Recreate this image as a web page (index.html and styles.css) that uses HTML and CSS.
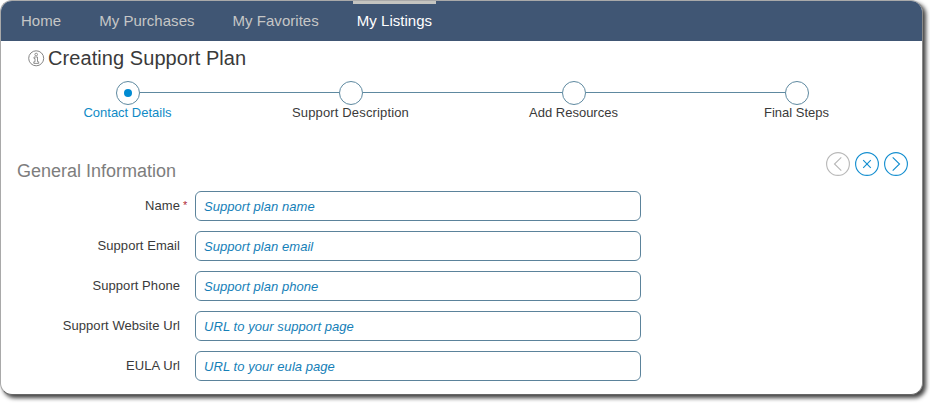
FILE: index.html
```html
<!DOCTYPE html>
<html lang="en">
<head>
<meta charset="utf-8">
<title>Creating Support Plan</title>
<link rel="stylesheet" href="styles.css">
</head>
<body>
<div class="window">
  <nav class="nav">
    <a class="tab">Home</a>
    <a class="tab">My Purchases</a>
    <a class="tab">My Favorites</a>
    <a class="tab active">My Listings</a>
  </nav>
  <header class="title">
    <svg class="info" width="17" height="17" viewBox="0 0 17 17" fill="none" stroke="#858585">
      <circle cx="8.2" cy="8.3" r="7.5"/>
      <circle cx="8.2" cy="4.5" r="1.3" stroke-width=".9"/>
      <path d="M6 7H9.5V11.8H10.7V13.4H5.8V11.8H7V8.5H6Z" stroke-width=".9"/>
    </svg>
    <h1>Creating Support Plan</h1>
  </header>
  <ol class="steps">
    <li class="step current"><span class="dot"></span><span>Contact Details</span></li>
    <li class="step wide"><span class="dot"></span><span>Support Description</span></li>
    <li class="step"><span class="dot"></span><span>Add Resources</span></li>
    <li class="step"><span class="dot"></span><span>Final Steps</span></li>
  </ol>
  <div class="section">
    <h2>General Information</h2>
    <div class="actions">
      <svg class="disabled" width="24" height="24" viewBox="0 0 24 24"><circle cx="12" cy="12" r="11.4"/><path d="M15.3 5.3L8.5 12L15.3 18.7"/></svg>
      <svg width="24" height="24" viewBox="0 0 24 24"><circle cx="12" cy="12" r="11.4"/><path d="M8.2 8.2L15.8 15.8M15.8 8.2L8.2 15.8"/></svg>
      <svg width="24" height="24" viewBox="0 0 24 24"><circle cx="12" cy="12" r="11.4"/><path d="M8.7 5.3L15.5 12L8.7 18.7"/></svg>
    </div>
  </div>
  <form class="form">
    <label for="name">Name</label><span class="mark">*</span><input id="name" placeholder="Support plan name">
    <label for="email">Support Email</label><span class="mark"></span><input id="email" placeholder="Support plan email">
    <label for="phone">Support Phone</label><span class="mark"></span><input id="phone" placeholder="Support plan phone">
    <label for="site">Support Website Url</label><span class="mark"></span><input id="site" placeholder="URL to your support page">
    <label for="eula">EULA Url</label><span class="mark"></span><input id="eula" placeholder="URL to your eula page">
  </form>
</div>
</body>
</html>
```

FILE: styles.css
```css
* { box-sizing: border-box; }

body {
  margin: 0;
  height: 403px;
  overflow: hidden;
  background: #fff;
  font-family: "Liberation Sans", Arial, sans-serif;
  font-size: 13px;
  color: #3a3a3a;
}

.window {
  width: 923px;
  height: 395px;
  border: 1px solid #a9a9a9;
  border-right-color: #888;
  border-bottom-color: #666;
  border-radius: 12px;
  background: #fff;
  overflow: hidden;
  box-shadow: 3px 3px 4px rgba(0, 0, 0, .75);
}

.nav {
  display: flex;
  gap: 30px;
  height: 40px;
  padding-left: 16px;
  background: #405674;
}

.tab {
  padding: 0 4px;
  border-top: 3px solid transparent;
  font-size: 15px;
  line-height: 33px;
  letter-spacing: .03px;
  color: #c6c6c6;
}

.tab.active {
  border-top-color: #c4c4c0;
  color: #fff;
}

.title {
  display: flex;
  align-items: center;
  gap: 3px;
  height: 34px;
  padding-left: 27px;
}

h1, h2 {
  margin: 0;
  font-weight: normal;
}

h1 {
  font-size: 20px;
  line-height: 34px;
  letter-spacing: .07px;
}

.steps {
  display: grid;
  grid-template-columns: repeat(4, 223px);
  margin: 6px 0 0 15px;
  padding: 0;
  list-style: none;
}

.step {
  display: grid;
  grid-template-columns: 1fr 24px 1fr;
  line-height: 15px;
  text-align: center;
}

.wide { letter-spacing: .15px; }

.step::before,
.step::after {
  content: "";
  grid-row: 1;
  height: 1px;
  margin-top: 11px;
  background: #5e89a0;
}

.step::before { grid-column: 1; }
.step::after { grid-column: 3; }

.step:first-child::before,
.step:last-child::after { background: none; }

.dot {
  grid-column: 2;
  grid-row: 1;
  display: grid;
  place-items: center;
  width: 24px;
  height: 24px;
  border: 1px solid #5e89a0;
  border-radius: 50%;
}

.step > span:last-child {
  grid-column: 1 / -1;
  grid-row: 2;
}

.current { color: #0f8ac6; }

.current .dot::before {
  content: "";
  width: 8px;
  height: 8px;
  border-radius: 50%;
  background: #008bd2;
}

.section {
  display: flex;
  justify-content: space-between;
  margin-top: 32px;
  padding: 0 14px 0 16px;
}

h2 {
  padding-top: 8px;
  font-size: 18px;
  line-height: 22px;
  color: #7d7d7d;
}

.actions {
  display: flex;
  gap: 5px;
}

.actions svg {
  fill: none;
  stroke: #158fd0;
  stroke-width: 1.15;
}

.actions .disabled { stroke: #b9b9b9; }

.form {
  display: grid;
  grid-template-columns: 179px 15px 446px;
  grid-auto-rows: 30px;
  row-gap: 10px;
  margin-top: 9px;
}

label {
  line-height: 29px;
  letter-spacing: .06px;
  text-align: right;
}

.mark {
  padding-left: 3px;
  line-height: 29px;
  font-size: 11px;
  color: #b02a37;
}

input {
  width: 446px;
  height: 30px;
  padding: 0 8px;
  border: 1px solid #5b839b;
  border-radius: 6px;
  background: #fff;
  font: italic 13px "Liberation Sans", Arial, sans-serif;
  letter-spacing: .05px;
}

input::placeholder {
  color: #1580b8;
  opacity: 1;
}
```
